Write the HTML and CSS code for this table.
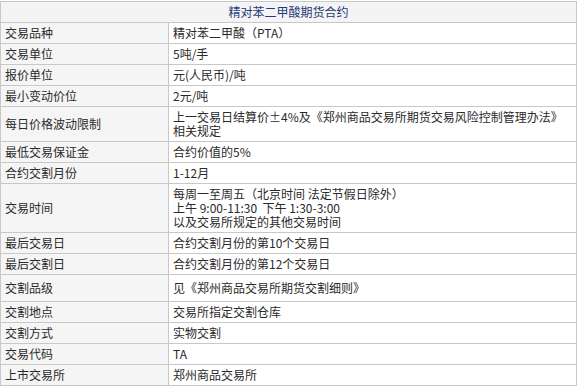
FILE: index.html
```html
<!DOCTYPE html>
<html lang="zh-CN">
<head>
<meta charset="utf-8">
<title>精对苯二甲酸期货合约</title>
<link rel="stylesheet" href="styles.css">
</head>
<body>
<table class="contract">
  <colgroup>
    <col class="col-label">
    <col class="col-value">
  </colgroup>
  <thead>
    <tr><th colspan="2" class="title">精对苯二甲酸期货合约</th></tr>
  </thead>
  <tbody>
    <tr><td class="label">交易品种</td><td class="value">精对苯二甲酸（PTA）</td></tr>
    <tr><td class="label">交易单位</td><td class="value">5吨/手</td></tr>
    <tr><td class="label">报价单位</td><td class="value">元(人民币)/吨</td></tr>
    <tr><td class="label">最小变动价位</td><td class="value">2元/吨</td></tr>
    <tr><td class="label">每日价格波动限制</td><td class="value"><span class="nowrap">上一交易日结算价±4%及《郑州商品交易所期货交易风险控制管理办法》</span><br>相关规定</td></tr>
    <tr><td class="label">最低交易保证金</td><td class="value">合约价值的5%</td></tr>
    <tr><td class="label">合约交割月份</td><td class="value">1-12月</td></tr>
    <tr><td class="label">交易时间</td><td class="value">每周一至周五（北京时间 法定节假日除外）<br>上午 9:00-11:30&nbsp; 下午 1:30-3:00<br>以及交易所规定的其他交易时间</td></tr>
    <tr><td class="label">最后交易日</td><td class="value">合约交割月份的第10个交易日</td></tr>
    <tr><td class="label">最后交割日</td><td class="value">合约交割月份的第12个交易日</td></tr>
    <tr class="tall"><td class="label">交割品级</td><td class="value">见《郑州商品交易所期货交割细则》</td></tr>
    <tr><td class="label">交割地点</td><td class="value">交易所指定交割仓库</td></tr>
    <tr><td class="label">交割方式</td><td class="value">实物交割</td></tr>
    <tr><td class="label">交易代码</td><td class="value">TA</td></tr>
    <tr><td class="label">上市交易所</td><td class="value">郑州商品交易所</td></tr>
  </tbody>
</table>
</body>
</html>
```

FILE: styles.css
```css
html, body {
  margin: 0;
  padding: 0;
  background: #ffffff;
}

body {
  padding-top: 1px;
  font-family: "Noto Sans CJK SC", "Microsoft YaHei", sans-serif;
  font-size: 12px;
  color: #2a2a2a;
  text-spacing-trim: space-all;
}

.contract {
  border-collapse: collapse;
  width: 576px;
  table-layout: fixed;
}

.col-label {
  width: 168px;
}

.col-value {
  width: 408px;
}

.contract th,
.contract td {
  border: 1px solid #c8c8c8;
  padding: 3px 4px;
  line-height: 14px;
  height: 14px;
  text-align: left;
  vertical-align: middle;
  font-weight: normal;
}

.contract .title {
  background: #f4f4f4;
  color: #1f3b7a;
  text-align: center;
}

.contract .label {
  background: #f5f5f5;
}

.contract .value {
  background: #ffffff;
}

.nowrap {
  white-space: nowrap;
}

.contract .tall td {
  height: 20px;
}
```
